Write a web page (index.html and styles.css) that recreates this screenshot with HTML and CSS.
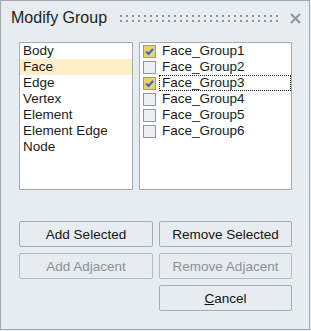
FILE: index.html
```html
<!DOCTYPE html>
<html>
<head>
<meta charset="utf-8">
<link rel="stylesheet" href="styles.css">
</head>
<body>
<div class="dialog">
  <div class="titlebar">
    <span class="title">Modify Group</span>
    <span class="grip"></span>
    <svg class="close" width="11" height="11" viewBox="0 0 11 11"><path d="M1 1L10 10M10 1L1 10" stroke="#8e949a" stroke-width="2" fill="none"/></svg>
  </div>
  <div class="lists">
    <ul class="list types">
      <li>Body</li>
      <li class="sel">Face</li>
      <li>Edge</li>
      <li>Vertex</li>
      <li>Element</li>
      <li>Element Edge</li>
      <li>Node</li>
    </ul>
    <ul class="list groups">
      <li><span class="cb on"><svg width="11" height="11" viewBox="0 0 11 11"><path d="M2 5.5L4.5 8L9 3" stroke="#2a6bd6" stroke-width="2" fill="none"/></svg></span><span class="lbl">Face_Group1</span></li>
      <li><span class="cb"></span><span class="lbl">Face_Group2</span></li>
      <li><span class="cb on"><svg width="11" height="11" viewBox="0 0 11 11"><path d="M2 5.5L4.5 8L9 3" stroke="#2a6bd6" stroke-width="2" fill="none"/></svg></span><span class="lbl focus">Face_Group3</span></li>
      <li><span class="cb"></span><span class="lbl">Face_Group4</span></li>
      <li><span class="cb"></span><span class="lbl">Face_Group5</span></li>
      <li><span class="cb"></span><span class="lbl">Face_Group6</span></li>
    </ul>
  </div>
  <div class="buttons">
    <button class="btn">Add Selected</button>
    <button class="btn">Remove Selected</button>
    <button class="btn disabled">Add Adjacent</button>
    <button class="btn disabled">Remove Adjacent</button>
    <button class="btn cancel"><u>C</u>ancel</button>
  </div>
</div>
</body>
</html>
```
FILE: styles.css
```css
html, body {
  margin: 0;
  padding: 0;
  background: #e6ecf0;
}
.dialog {
  width: 310px;
  height: 330px;
  box-sizing: border-box;
  border: 1px solid #a4a9ae;
  background: #e6ecf0;
  font-family: "Liberation Sans", Arial, sans-serif;
  color: #1b1b1b;
}
.titlebar {
  display: flex;
  align-items: center;
  height: 34px;
  padding-left: 10px;
}
.title {
  font-size: 16px;
  line-height: 18px;
  color: #1e1e1e;
}
.grip {
  width: 158px;
  height: 7px;
  margin-left: 13px;
  margin-top: 1px;
  background: conic-gradient(at 2px 2px, transparent 75%, #8e949a 0) 0 0 / 6px 5px;
}
.close {
  margin-left: 12px;
  margin-top: 1px;
}
.lists {
  display: flex;
  gap: 6px;
  margin-top: 7px;
  padding-left: 18px;
}
.list {
  list-style: none;
  margin: 0;
  padding: 0;
  height: 148px;
  box-sizing: border-box;
  border: 1px solid #a7acb1;
  background: #ffffff;
  font-size: 13.5px;
}
.list li {
  height: 16px;
  line-height: 16px;
  white-space: nowrap;
}
.types {
  width: 114px;
}
.types li {
  padding-left: 3px;
}
.types li.sel {
  background: #fdefca;
}
.groups {
  width: 153px;
}
.groups li {
  display: flex;
  align-items: center;
}
.cb {
  width: 13px;
  height: 13px;
  box-sizing: border-box;
  margin-left: 3px;
  margin-top: 1px;
  border: 1px solid #8f959a;
  background: #eef1f3;
  display: flex;
  align-items: center;
  justify-content: center;
}
.cb.on {
  background: #f3cf6b;
  border-color: #9a9a8a;
}
.lbl {
  flex: 1;
  margin-left: 3px;
  padding-left: 2px;
  height: 16px;
  box-sizing: border-box;
  border: 1px solid transparent;
  line-height: 14px;
}
.lbl.focus {
  border: 1px dotted #222;
}
.buttons {
  display: grid;
  grid-template-columns: 134px 133px;
  gap: 6px;
  padding-left: 18px;
  margin-top: 31px;
}
.btn {
  height: 26px;
  box-sizing: border-box;
  border: 1px solid #a6abb0;
  border-radius: 2px;
  background: #e6ecf0;
  font-family: "Liberation Sans", Arial, sans-serif;
  font-size: 13.5px;
  color: #141414;
  padding: 0;
}
.btn.disabled {
  color: #8c9196;
  border-color: #b5babe;
}
.cancel {
  grid-column: 2;
}
.cancel u {
  text-decoration-thickness: 1px;
}
```
